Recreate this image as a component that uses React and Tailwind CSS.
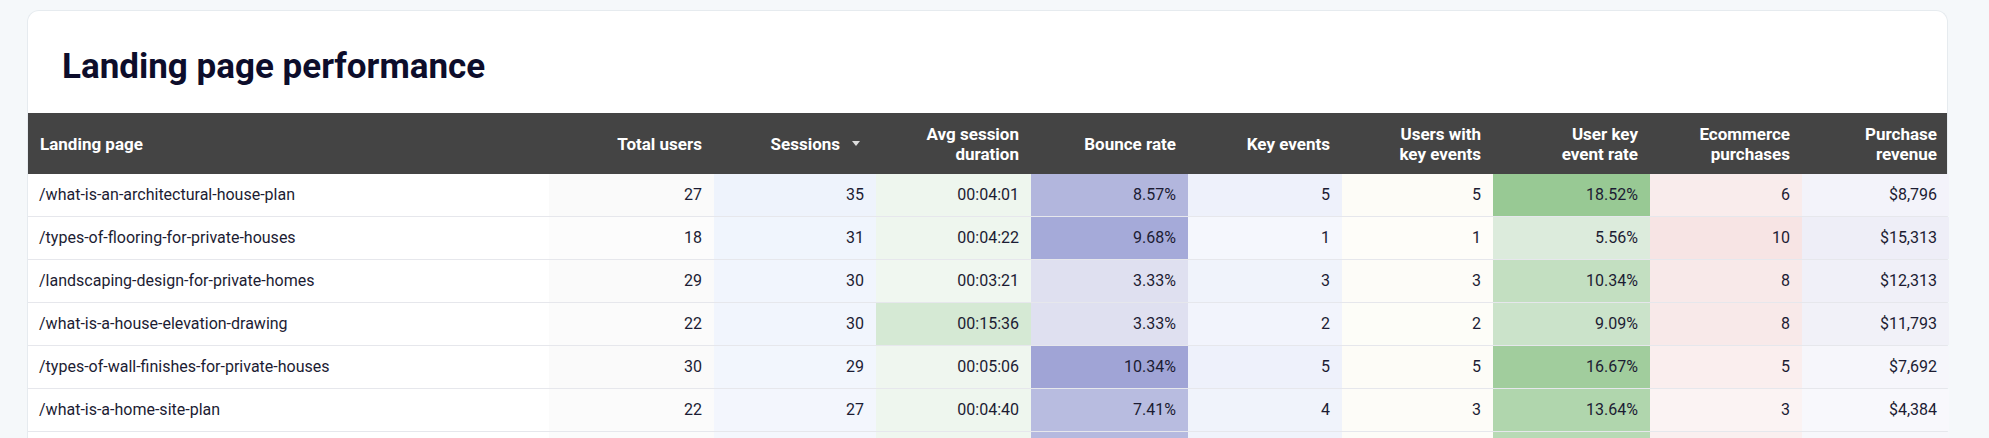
const COLS = [
  { label: ["Landing page"], w: "w-[521px]", left: true },
  { label: ["Total users"], w: "w-[165px]" },
  { label: ["Sessions"], w: "w-[162px]", sort: true },
  { label: ["Avg session", "duration"], w: "w-[155px]" },
  { label: ["Bounce rate"], w: "w-[157px]" },
  { label: ["Key events"], w: "w-[154px]" },
  { label: ["Users with", "key events"], w: "w-[151px]" },
  { label: ["User key", "event rate"], w: "w-[157px]" },
  { label: ["Ecommerce", "purchases"], w: "w-[152px]" },
  { label: ["Purchase", "revenue"], w: "w-[147px]" },
];

// each cell: [text, bg]
const ROWS = [
  [["/what-is-an-architectural-house-plan", "bg-white"], ["27", "bg-[#fafafa]"], ["35", "bg-[#eef3fc]"], ["00:04:01", "bg-[#eef6ee]"], ["8.57%", "bg-[#b2b6dd]"], ["5", "bg-[#eef1fb]"], ["5", "bg-[#fdfcf7]"], ["18.52%", "bg-[#98c994]"], ["6", "bg-[#f9ecec]"], ["$8,796", "bg-[#f3f3fa]"]],
  [["/types-of-flooring-for-private-houses", "bg-white"], ["18", "bg-[#fcfcfc]"], ["31", "bg-[#f0f5fd]"], ["00:04:22", "bg-[#eef6ee]"], ["9.68%", "bg-[#a5aad9]"], ["1", "bg-[#f5f7fd]"], ["1", "bg-[#fefdf9]"], ["5.56%", "bg-[#dcebdc]"], ["10", "bg-[#f7e4e4]"], ["$15,313", "bg-[#eeeef7]"]],
  [["/landscaping-design-for-private-homes", "bg-white"], ["29", "bg-[#fafafa]"], ["30", "bg-[#f1f5fd]"], ["00:03:21", "bg-[#f0f7f0]"], ["3.33%", "bg-[#dfe0f0]"], ["3", "bg-[#f0f3fb]"], ["3", "bg-[#fdfcf8]"], ["10.34%", "bg-[#c3dfc1]"], ["8", "bg-[#f8e9e9]"], ["$12,313", "bg-[#f0f0f8]"]],
  [["/what-is-a-house-elevation-drawing", "bg-white"], ["22", "bg-[#fbfbfb]"], ["30", "bg-[#f1f5fd]"], ["00:15:36", "bg-[#d5e9d4]"], ["3.33%", "bg-[#dfe0f0]"], ["2", "bg-[#f2f4fc]"], ["2", "bg-[#fdfdf8]"], ["9.09%", "bg-[#cbe3ca]"], ["8", "bg-[#f8e9e9]"], ["$11,793", "bg-[#f1f1f8]"]],
  [["/types-of-wall-finishes-for-private-houses", "bg-white"], ["30", "bg-[#fafafa]"], ["29", "bg-[#f2f6fd]"], ["00:05:06", "bg-[#eff6ef]"], ["10.34%", "bg-[#a0a4d6]"], ["5", "bg-[#eef1fb]"], ["5", "bg-[#fdfcf7]"], ["16.67%", "bg-[#a1cd9d]"], ["5", "bg-[#faeeee]"], ["$7,692", "bg-[#f6f6fb]"]],
  [["/what-is-a-home-site-plan", "bg-white"], ["22", "bg-[#fbfbfb]"], ["27", "bg-[#f3f6fd]"], ["00:04:40", "bg-[#eef6ee]"], ["7.41%", "bg-[#b8bce0]"], ["4", "bg-[#f0f3fb]"], ["3", "bg-[#fdfcf8]"], ["13.64%", "bg-[#b0d6ad]"], ["3", "bg-[#fbf3f3]"], ["$4,384", "bg-[#f8f8fc]"]],
  [["", "bg-white"], ["", "bg-[#fbfbfb]"], ["", "bg-[#f4f7fd]"], ["", "bg-[#eff6ef]"], ["", "bg-[#b5b9df]"], ["", "bg-[#f0f3fb]"], ["", "bg-[#fdfcf8]"], ["", "bg-[#b8dab5]"], ["", "bg-[#faefef]"], ["", "bg-[#f7f7fb]"]],
];

export default function App() {
  return (
    <div className="h-[438px] overflow-hidden bg-[#f5f8fa] pt-[10px] pl-[27px] [font-family:Roboto,sans-serif]">
      <div className="w-[1921px] bg-white rounded-t-xl border border-[#e6ebef] border-b-0">
        <h1 className="px-[34px] pt-[36px] pb-[26px] text-[35px] leading-[40px] font-bold text-[#0d0d2b]">
          Landing page performance
        </h1>
        <div className="flex bg-[#444444] h-[61px] text-white font-bold text-[17px] leading-[20px]">
          {COLS.map((c, i) => (
            <div key={i} className={`${c.w} shrink-0 flex items-center px-[12px] ${c.left ? "justify-start" : "justify-end text-right"}`}>
              <div>
                {c.label.map((l) => <div key={l}>{l}</div>)}
              </div>
              {c.sort && (
                <svg className="ml-[12px] mr-[4px]" width="8" height="5" viewBox="0 0 8 5"><path d="M0 0h8L4 5z" fill="#ddd" /></svg>
              )}
            </div>
          ))}
        </div>
        {ROWS.map((r, ri) => (
          <div key={ri} className="flex h-[43px] text-[16px] text-[#1c1c33] border-b border-[#e6e7ec]">
            {r.map(([t, bg], ci) => (
              <div key={ci} className={`${COLS[ci].w} shrink-0 ${bg} flex items-center px-[12px] ${ci === 0 ? "justify-start pl-[11px]" : "justify-end"}`}>
                {t}
              </div>
            ))}
          </div>
        ))}
      </div>
    </div>
  );
}
